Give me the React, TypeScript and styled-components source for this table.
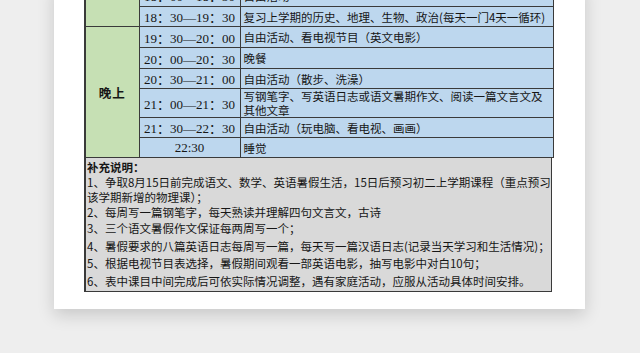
import React from "react";
import styled, { createGlobalStyle } from "styled-components";

const GlobalStyle = createGlobalStyle`
  html, body {
    margin: 0;
    padding: 0;
    background: #eeeeee;
    overflow: hidden;
  }
  body {
    font-family: "Noto Sans CJK SC", "Liberation Sans", sans-serif;
    color: #161616;
  }
`;

const Stage = styled.div`
  width: 640px;
  height: 353px;
  overflow: hidden;
`;

const Sheet = styled.div`
  width: 531px;
  margin: -16px 0 0 54px;
  padding: 0 33px 17px 30px;
  box-sizing: border-box;
  background: #ffffff;
  box-shadow: 0 6px 16px rgba(0, 0, 0, 0.16);
`;

const Schedule = styled.table`
  width: 468px;
  border-collapse: collapse;
  table-layout: fixed;
  border-left: 2px solid #3a3a3a;
  border-right: 1px solid #3a3a3a;
`;

const Row = styled.tr<{ $h: number }>`
  height: ${(p) => p.$h}px;
`;

const PeriodCell = styled.td`
  background: #c6e0b4;
  border: 1px solid #3a3a3a;
  text-align: center;
  vertical-align: middle;
  font-weight: 700;
  font-size: 12.5px;
  letter-spacing: 1px;
  padding: 0;
`;

const TimeCell = styled.td`
  background: #bdd7ee;
  border: 1px solid #3a3a3a;
  text-align: center;
  vertical-align: middle;
  font-family: "Liberation Serif", "Noto Sans CJK SC", serif;
  font-size: 13px;
  padding: 0;
  white-space: nowrap;
`;

const TaskCell = styled.td`
  background: #bdd7ee;
  border: 1px solid #3a3a3a;
  text-align: left;
  vertical-align: middle;
  font-size: 11.5px;
  line-height: 14px;
  padding: 0 2px 0 3px;
  overflow: hidden;
`;

const Notes = styled.div`
  width: 468px;
  box-sizing: border-box;
  background: #d9d9d9;
  border-left: 2px solid #3a3a3a;
  border-right: 1px solid #3a3a3a;
  border-bottom: 1px solid #3a3a3a;
  padding: 2px 0 1px 1px;
  font-size: 11.5px;
`;

const NoteTitle = styled.div`
  font-weight: 700;
  line-height: 15px;
`;

const NoteItem = styled.div<{ $lh: number }>`
  line-height: ${(p) => p.$lh}px;
  white-space: nowrap;
`;

const NoteLine = styled.span`
  display: block;
`;

type Slot = { time: string; task: string; h: number };

const afternoon: Slot[] = [
  { time: "18：00—18：30", task: "自由活动", h: 22 },
  { time: "18：30—19：30", task: "复习上学期的历史、地理、生物、政治(每天一门4天一循环)", h: 20 },
];

const evening: Slot[] = [
  { time: "19：30—20：00", task: "自由活动、看电视节目（英文电影）", h: 21 },
  { time: "20：00—20：30", task: "晚餐", h: 21 },
  { time: "20：30—21：00", task: "自由活动（散步、洗澡）", h: 20 },
  { time: "21：00—21：30", task: "写钢笔字、写英语日志或语文暑期作文、阅读一篇文言文及其他文章", h: 28 },
  { time: "21：30—22：30", task: "自由活动（玩电脑、看电视、画画）", h: 19 },
  { time: "22:30", task: "睡觉", h: 20 },
];

const notes: { lines: string[]; lh: number }[] = [
  {
    lines: [
      "1、争取8月15日前完成语文、数学、英语暑假生活，15日后预习初二上学期课程（重点预习",
      "该学期新增的物理课）；",
    ],
    lh: 15,
  },
  { lines: ["2、每周写一篇钢笔字，每天熟读并理解四句文言文，古诗"], lh: 15 },
  { lines: ["3、三个语文暑假作文保证每两周写一个；"], lh: 17.5 },
  { lines: ["4、暑假要求的八篇英语日志每周写一篇，每天写一篇汉语日志(记录当天学习和生活情况)；"], lh: 17.5 },
  { lines: ["5、根据电视节目表选择，暑假期间观看一部英语电影，抽写电影中对白10句；"], lh: 17.5 },
  { lines: ["6、表中课目中间完成后可依实际情况调整，遇有家庭活动，应服从活动具体时间安排。"], lh: 17.5 },
];

function Group({ label, slots }: { label: string; slots: Slot[] }) {
  return (
    <>
      {slots.map((s, i) => (
        <Row key={s.time} $h={s.h}>
          {i === 0 && <PeriodCell rowSpan={slots.length}>{label}</PeriodCell>}
          <TimeCell>{s.time}</TimeCell>
          <TaskCell>{s.task}</TaskCell>
        </Row>
      ))}
    </>
  );
}

export default function App() {
  return (
    <Stage>
      <GlobalStyle />
      <Sheet>
        <Schedule>
          <colgroup>
            <col style={{ width: 54 }} />
            <col style={{ width: 101 }} />
            <col style={{ width: 313 }} />
          </colgroup>
          <tbody>
            <Group label="" slots={afternoon} />
            <Group label="晚上" slots={evening} />
          </tbody>
        </Schedule>
        <Notes>
          <NoteTitle>补充说明：</NoteTitle>
          {notes.map((n, i) => (
            <NoteItem key={i} $lh={n.lh}>
              {n.lines.map((l) => (
                <NoteLine key={l}>{l}</NoteLine>
              ))}
            </NoteItem>
          ))}
        </Notes>
      </Sheet>
    </Stage>
  );
}
